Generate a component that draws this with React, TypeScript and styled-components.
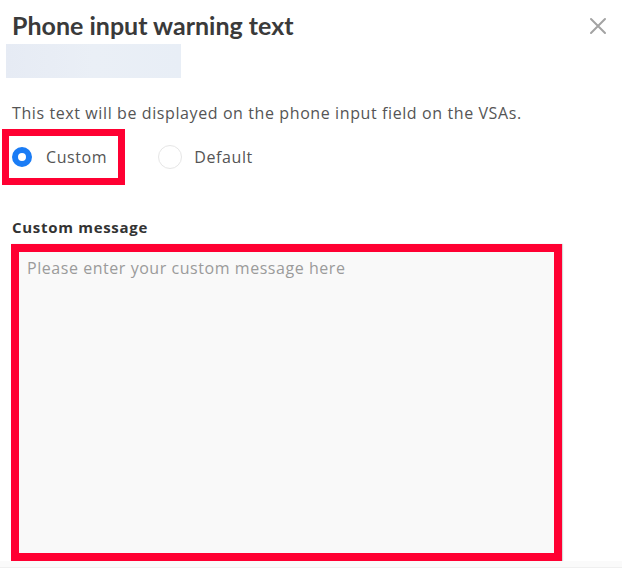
import React from "react";
import styled, { createGlobalStyle } from "styled-components";

const GlobalStyle = createGlobalStyle`
  html, body {
    margin: 0;
    padding: 0;
    background: #ffffff;
  }
  body {
    font-family: "Open Sans", Lato, sans-serif;
    color: #444;
  }
`;

const Page = styled.div`
  width: 622px;
  height: 568px;
  display: flex;
  flex-direction: column;
  overflow: hidden;
`;

const Body = styled.div`
  display: flex;
  flex-direction: column;
  padding: 10px 0 0 0;
`;

const Header = styled.div`
  display: flex;
  justify-content: space-between;
  align-items: flex-start;
  padding: 0 14px 0 12px;
`;

const Title = styled.h2`
  margin: 0;
  font-family: Lato, "Open Sans", sans-serif;
  font-size: 25px;
  line-height: 30px;
  font-weight: 700;
  color: #3a3a3a;
`;

const CloseButton = styled.button`
  border: none;
  background: none;
  padding: 0;
  margin-top: 6px;
  width: 20px;
  height: 20px;
  display: flex;
  align-items: center;
  justify-content: center;
  cursor: pointer;
`;

const Redacted = styled.div`
  margin: 4px 0 0 6px;
  width: 175px;
  height: 34px;
  background: linear-gradient(90deg, #e6ebf4 0%, #eaeff6 50%, #e8eef6 100%);
`;

const Description = styled.p`
  margin: 25px 0 0 12px;
  font-size: 16px;
  line-height: 20px;
  letter-spacing: 0.6px;
  color: #555;
`;

const RadioGroup = styled.div`
  display: flex;
  align-items: center;
  margin: 6px 0 0 2px;
  gap: 25px;
`;

const Option = styled.label<{ $highlight?: boolean }>`
  display: flex;
  align-items: center;
  gap: 12px;
  height: 42px;
  padding: 0 11px 0 1px;
  border: 7px solid ${(p) => (p.$highlight ? "#ff0032" : "transparent")};
  font-size: 16px;
  letter-spacing: 0.6px;
  color: #555;
  cursor: pointer;
`;

const RadioCircle = styled.span<{ $checked?: boolean }>`
  box-sizing: border-box;
  width: ${(p) => (p.$checked ? "20px" : "24px")};
  height: ${(p) => (p.$checked ? "20px" : "24px")};
  margin: ${(p) => (p.$checked ? "0 2px" : "0")};
  border-radius: 50%;
  background: #fff;
  border: ${(p) => (p.$checked ? "6px solid #1a7cf5" : "1px solid #e6e6e6")};
`;

const FieldLabel = styled.div`
  margin: 32px 0 0 12px;
  font-size: 15px;
  line-height: 20px;
  font-weight: 700;
  letter-spacing: 0.7px;
  color: #333;
`;

const MessageBox = styled.textarea`
  box-sizing: border-box;
  margin: 7px 0 0 11px;
  width: 551px;
  height: 317px;
  border: 8px solid #ff0032;
  background: #f9f9f9;
  padding: 6px 8px;
  font-family: "Open Sans", Lato, sans-serif;
  font-size: 16px;
  line-height: 20px;
  letter-spacing: 0.55px;
  color: #444;
  resize: none;
  outline: none;
  box-shadow: 1px 0 1px rgba(0, 0, 0, 0.15);

  &::placeholder {
    color: #9b9b9b;
  }
`;

const Footer = styled.div`
  flex: 1;
  background: #fafafa;
  border-bottom: 1px solid #efefef;
`;

const CloseIcon = () => (
  <svg width="18" height="18" viewBox="0 0 18 18">
    <path d="M2 2 L16 16 M16 2 L2 16" stroke="#a3a3a3" strokeWidth="2" strokeLinecap="round" />
  </svg>
);

export default function App() {
  return (
    <Page>
      <GlobalStyle />
      <Body>
        <Header>
          <Title>Phone input warning text</Title>
          <CloseButton aria-label="Close">
            <CloseIcon />
          </CloseButton>
        </Header>
        <Redacted />
        <Description>This text will be displayed on the phone input field on the VSAs.</Description>
        <RadioGroup>
          <Option $highlight>
            <RadioCircle $checked />
            Custom
          </Option>
          <Option>
            <RadioCircle />
            Default
          </Option>
        </RadioGroup>
        <FieldLabel>Custom message</FieldLabel>
        <MessageBox placeholder="Please enter your custom message here" />
      </Body>
      <Footer />
    </Page>
  );
}
